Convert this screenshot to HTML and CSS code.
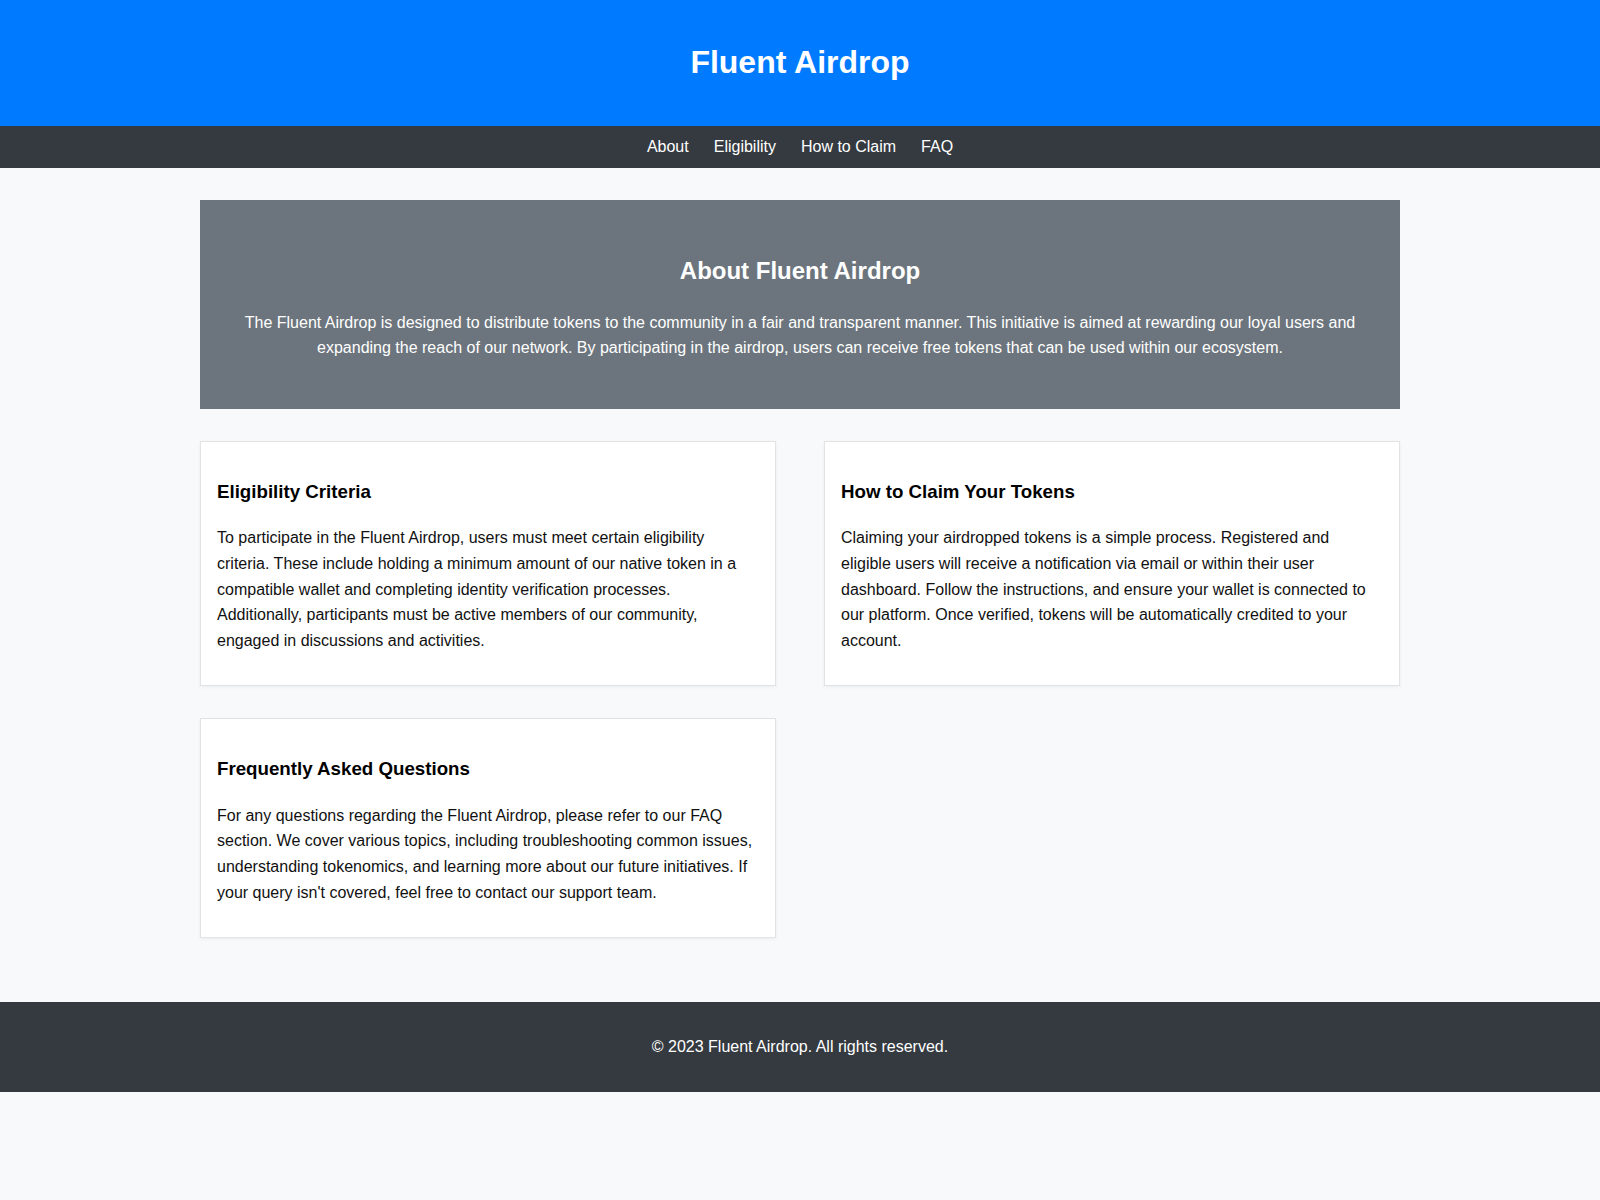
FILE: index.html
```html
<!DOCTYPE html>
<html lang="en">
<head>
<meta charset="UTF-8">
<title>Fluent Airdrop</title>
<link rel="stylesheet" href="styles.css">
</head>
<body>
<header class="site-header">
  <h1>Fluent Airdrop</h1>
</header>
<nav class="site-nav">
  <a href="#about">About</a>
  <a href="#eligibility">Eligibility</a>
  <a href="#claim">How to Claim</a>
  <a href="#faq">FAQ</a>
</nav>
<main class="container">
  <section class="hero" id="about">
    <h2>About Fluent Airdrop</h2>
    <p>The Fluent Airdrop is designed to distribute tokens to the community in a fair and transparent manner. This initiative is aimed at rewarding our loyal users and expanding the reach of our network. By participating in the airdrop, users can receive free tokens that can be used within our ecosystem.</p>
  </section>
  <div class="cards">
    <section class="card" id="eligibility">
      <h3>Eligibility Criteria</h3>
      <p>To participate in the Fluent Airdrop, users must meet certain eligibility criteria. These include holding a minimum amount of our native token in a compatible wallet and completing identity verification processes. Additionally, participants must be active members of our community, engaged in discussions and activities.</p>
    </section>
    <section class="card" id="claim">
      <h3>How to Claim Your Tokens</h3>
      <p>Claiming your airdropped tokens is a simple process. Registered and eligible users will receive a notification via email or within their user dashboard. Follow the instructions, and ensure your wallet is connected to our platform. Once verified, tokens will be automatically credited to your account.</p>
    </section>
    <section class="card" id="faq">
      <h3>Frequently Asked Questions</h3>
      <p>For any questions regarding the Fluent Airdrop, please refer to our FAQ section. We cover various topics, including troubleshooting common issues, understanding tokenomics, and learning more about our future initiatives. If your query isn't covered, feel free to contact our support team.</p>
    </section>
  </div>
</main>
<footer class="site-footer">
  <p>&copy; 2023 Fluent Airdrop. All rights reserved.</p>
</footer>
</body>
</html>
```
FILE: styles.css
```css
* { box-sizing: border-box; }

body {
  margin: 0;
  font-family: "Liberation Sans", Arial, sans-serif;
  font-size: 16px;
  line-height: 1.6;
  background: #f8f9fa;
  color: #111;
}

.site-header {
  background: #007bff;
  color: #fff;
  text-align: center;
  padding: 16px 0;
}

.site-header h1 {
  margin: 21.44px 0;
  font-size: 32px;
  font-weight: bold;
}

.site-nav {
  background: #343a40;
  display: flex;
  justify-content: center;
  gap: 25px;
  padding: 8px 0;
}

.site-nav a {
  color: #fff;
  text-decoration: none;
}

.container {
  width: 1200px;
  margin: 0 auto;
  padding: 32px 0;
}

.hero {
  background: #6c757d;
  color: #fff;
  text-align: center;
  padding: 32px 40px 32px;
  margin-bottom: 32px;
}

.hero h2 {
  font-size: 24px;
  margin: 19.92px 0;
}

.hero p {
  margin: 16px 0;
}

.cards {
  display: flex;
  flex-wrap: wrap;
  justify-content: space-between;
}

.card {
  width: 48%;
  background: #fff;
  border: 1px solid #e2e3e5;
  box-shadow: 0 1px 3px rgba(0, 0, 0, 0.06);
  padding: 16px;
  margin-bottom: 32px;
}

.card h3 {
  font-size: 18.72px;
  margin: 18.72px 0;
  color: #000;
}

.card p {
  margin: 16px 0;
}

.site-footer {
  background: #343a40;
  color: #fff;
  text-align: center;
  padding: 16px 0;
}

.site-footer p {
  margin: 16px 0;
}
```
